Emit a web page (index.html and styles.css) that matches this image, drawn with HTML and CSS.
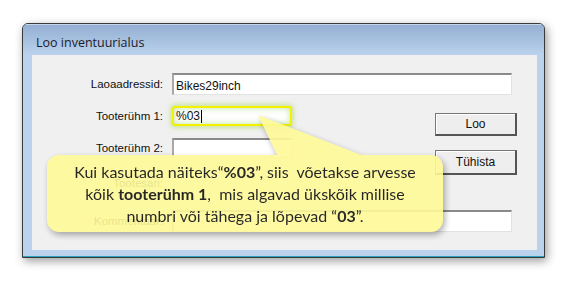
FILE: index.html
```html
<!DOCTYPE html>
<html lang="et">
<head>
<meta charset="utf-8">
<title>Loo inventuurialus</title>
<link rel="stylesheet" href="styles.css">
</head>
<body>
<div class="stage">
  <div class="window">
    <div class="titlebar">Loo inventuurialus</div>
    <div class="frame">
      <div class="client">
        <div class="row">
          <label class="label">Laoaadressid:</label>
          <div class="input wide">Bikes29inch</div>
        </div>
        <div class="mid">
          <div class="fields">
            <div class="row">
              <label class="label">Tooterühm 1:</label>
              <div class="input short focus">%03<span class="caret"></span></div>
            </div>
            <div class="row gap12">
              <label class="label">Tooterühm 2:</label>
              <div class="input short"></div>
            </div>
            <div class="row gap15">
              <label class="label">Tootesari:</label>
            </div>
          </div>
          <div class="buttons">
            <div class="btn">Loo</div>
            <div class="btn btn2">Tühista</div>
          </div>
        </div>
        <div class="row gap17">
          <label class="label">Kommentaar:</label>
          <div class="input wide"></div>
        </div>
      </div>
    </div>
  </div>
  <div class="callout">
    <div class="pointer"></div>
    <div class="bubble">
      <p>Kui kasutada näiteks“<b>%03</b>”, siis&nbsp; võetakse arvesse</p>
      <p>kõik <b>tooterühm 1</b>,&nbsp; mis algavad ükskõik millise</p>
      <p>numbri või tähega ja lõpevad “<b>03</b>”.</p>
    </div>
  </div>
</div>
</body>
</html>
```
FILE: styles.css
```css
html, body {
  margin: 0;
  padding: 0;
  background: #ffffff;
}
.stage {
  position: relative;
  width: 568px;
  height: 281px;
  padding: 23px 0 0 22px;
  box-sizing: border-box;
}
.window {
  width: 523px;
  height: 235px;
  box-sizing: border-box;
  border: 1px solid #3a3a3a;
  border-radius: 6px 6px 0 0;
  background: #bad2ec;
  box-shadow: 2px 3px 10px rgba(0, 0, 0, 0.4);
  display: flex;
  flex-direction: column;
  overflow: hidden;
}
.titlebar {
  height: 31px;
  box-sizing: border-box;
  padding: 9px 0 0 13px;
  background: linear-gradient(#94afd3, #bad2ec);
  font-family: "Open Sans", "Noto Sans", sans-serif;
  font-size: 12.5px;
  color: #1b1b2b;
  border-top: 1px solid #c6d7ea;
}
.frame {
  flex: 1;
  padding: 0 7px 6px 9px;
  border-bottom: 1px solid #2aa2bb;
  display: flex;
}
.client {
  flex: 1;
  background: #f0f0f0;
  padding-top: 18px;
  display: flex;
  flex-direction: column;
  font-family: "Liberation Sans", Arial, sans-serif;
}
.row {
  display: flex;
  align-items: center;
  height: 20px;
}
.gap12 { margin-top: 12px; }
.gap15 { margin-top: 15px; }
.gap17 { margin-top: 17px; height: 22px; }
.client > .row:first-child { height: 22px; margin-bottom: 11px; }
.label {
  width: 131px;
  margin-right: 9px;
  text-align: right;
  font-size: 11.5px;
  color: #111;
}
.input {
  height: 100%;
  box-sizing: border-box;
  background: #fff;
  border-top: 2px solid #8a8a8a;
  border-left: 2px solid #a8a8a8;
  border-right: 1px solid #e2e2e2;
  border-bottom: 1px solid #e2e2e2;
  font-size: 12px;
  color: #111;
  padding: 2px 0 0 2px;
  display: flex;
  align-items: center;
}
.wide { width: 340px; }
.short { width: 120px; }
.focus {
  border: 2px solid #f2f200;
  border-radius: 3px;
  box-shadow: 0 0 4px 2px rgba(180, 220, 110, 0.6), inset 0 0 6px rgba(160, 210, 110, 0.65);
  padding-top: 0;
}
.caret {
  display: inline-block;
  width: 1px;
  height: 13px;
  background: #000;
  margin-left: 1px;
}
.mid {
  display: flex;
}
.fields {
  display: flex;
  flex-direction: column;
}
.buttons {
  margin-left: auto;
  margin-right: 20px;
  padding-top: 7px;
  display: flex;
  flex-direction: column;
}
.btn {
  width: 82px;
  height: 23px;
  box-sizing: border-box;
  background: #eeeeee;
  border: 1px solid #777;
  border-right: 2px solid #555;
  border-bottom: 2px solid #555;
  box-shadow: inset 1px 1px 0 #ffffff;
  font-size: 12px;
  color: #111;
  display: flex;
  align-items: center;
  justify-content: center;
}
.btn2 {
  margin-top: 14px;
  height: 25px;
}
.callout {
  position: absolute;
  left: 47px;
  top: 115px;
  width: 396px;
  height: 117px;
  opacity: 0.9;
  filter: drop-shadow(2px 3px 3px rgba(0, 0, 0, 0.35));
}
.pointer {
  position: absolute;
  left: 0;
  top: 0;
  width: 396px;
  height: 46px;
  background: #fffa98;
  clip-path: polygon(211px 0, 233px 46px, 330px 46px);
}
.bubble {
  position: absolute;
  left: 0;
  top: 40px;
  width: 396px;
  height: 77px;
  box-sizing: border-box;
  background: #fffa98;
  border-radius: 12px;
  padding-top: 6px;
  font-family: Lato, "Open Sans", sans-serif;
  font-size: 16px;
  color: #111;
  text-align: center;
}
.bubble p {
  margin: 0;
  height: 22px;
  line-height: 22px;
  white-space: nowrap;
}
```
